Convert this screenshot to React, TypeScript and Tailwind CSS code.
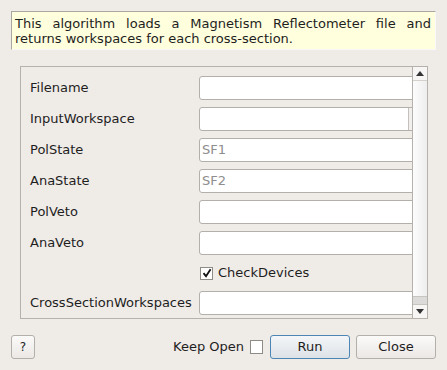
import React from "react";

type Row = {
  label: string;
  placeholder?: string;
  combo?: boolean;
};

const rows: Row[] = [
  { label: "Filename" },
  { label: "InputWorkspace", combo: true },
  { label: "PolState", placeholder: "SF1" },
  { label: "AnaState", placeholder: "SF2" },
  { label: "PolVeto" },
  { label: "AnaVeto" },
];

function Field({ placeholder, combo }: { placeholder?: string; combo?: boolean }): JSX.Element {
  return (
    <div className="shrink-0 w-[230px] h-[24px] rounded-[3px] border border-[#b3afab] bg-white flex items-center">
      {combo ? (
        <div className="w-[208px] h-full" />
      ) : (
        <span className="pl-[2px] text-[#8e8e8e]">{placeholder}</span>
      )}
      {combo && <div className="h-full border-l border-[#c4c0bc] bg-[#f2f0ee] flex-1" />}
    </div>
  );
}

function Button({ children, primary }: { children: React.ReactNode; primary?: boolean }): JSX.Element {
  return (
    <div
      className={`h-[24px] w-[80px] rounded-[3px] border flex items-center justify-center bg-gradient-to-b ${
        primary
          ? "border-[#4d86b5] from-[#f4f6f8] to-[#dde2e7]"
          : "border-[#b3afab] from-[#fbfaf9] to-[#ebe8e5]"
      }`}
    >
      {children}
    </div>
  );
}

function App(): JSX.Element {
  return (
    <div
      className="w-[447px] h-[370px] bg-[#efebe7] flex flex-col text-[13px] text-[#1e1e1e] overflow-hidden"
      style={{ fontFamily: '"DejaVu Sans", sans-serif' }}
    >
      {/* description */}
      <div className="mt-[11px] mx-[11px] h-[39px] bg-[#ffffdd] border-t border-l border-[#aaa6a2] border-r-[#f8f8f8] border-b-[#f8f8f8] border-r border-b pl-[3px] pr-[4px] pt-[4px] leading-[15px] text-justify">
        This algorithm loads a Magnetism Reflectometer file and returns workspaces for each cross-section.
      </div>

      {/* properties */}
      <div className="mt-[16px] ml-[20px] w-[408px] h-[253px] border border-[#b5b1ad] flex">
        <div className="flex-1 overflow-hidden pt-[9px] pl-[9px] flex flex-col gap-[7px]">
          {rows.map((row) => (
            <div key={row.label} className="flex items-center h-[24px]">
              <div className="w-[169px] shrink-0">{row.label}</div>
              <Field placeholder={row.placeholder} combo={row.combo} />
            </div>
          ))}
          <div className="flex items-center h-[22px]">
            <div className="w-[170px] shrink-0" />
            <div className="w-[13px] h-[13px] border border-[#8f8b87] bg-white flex items-center justify-center">
              <svg width="10" height="10" viewBox="0 0 10 10">
                <path d="M1.5 5.2 L4 8.2 L8.6 1.2" fill="none" stroke="#111" strokeWidth="1.8" />
              </svg>
            </div>
            <span className="ml-[5px]">CheckDevices</span>
          </div>
          <div className="flex items-center h-[24px]">
            <div className="w-[169px] shrink-0">CrossSectionWorkspaces</div>
            <Field />
          </div>
        </div>

        {/* scrollbar */}
        <div className="w-[15px] border-l border-[#b5b1ad] flex flex-col">
          <div className="h-[14px] flex items-center justify-center border-b border-[#d4d0cc] bg-[#f7f6f5]">
            <svg width="8" height="5" viewBox="0 0 8 5">
              <path d="M0 5 L4 0 L8 5 Z" fill="#333" />
            </svg>
          </div>
          <div className="flex-1 bg-gradient-to-r from-[#fcfcfc] to-[#eeeeee] border-b border-[#c8c4c0]" />
          <div className="h-[7px] bg-[#dddbd9]" />
          <div className="h-[14px] flex items-center justify-center border-t border-[#c8c4c0] bg-[#f7f6f5]">
            <svg width="8" height="5" viewBox="0 0 8 5">
              <path d="M0 0 L8 0 L4 5 Z" fill="#333" />
            </svg>
          </div>
        </div>
      </div>

      {/* buttons */}
      <div className="mt-[16px] mx-[11px] h-[24px] flex items-center">
        <div className="w-[24px] h-[24px] rounded-[3px] border border-[#b3afab] bg-gradient-to-b from-[#fbfaf9] to-[#ebe8e5] flex items-center justify-center text-[12px]">
          ?
        </div>
        <div className="flex-1" />
        <span>Keep Open</span>
        <div className="ml-[6px] w-[13px] h-[14px] border border-[#8f8b87] bg-white" />
        <div className="ml-[7px]">
          <Button primary>Run</Button>
        </div>
        <div className="ml-[6px]">
          <Button>Close</Button>
        </div>
      </div>
    </div>
  );
}

export default App;
